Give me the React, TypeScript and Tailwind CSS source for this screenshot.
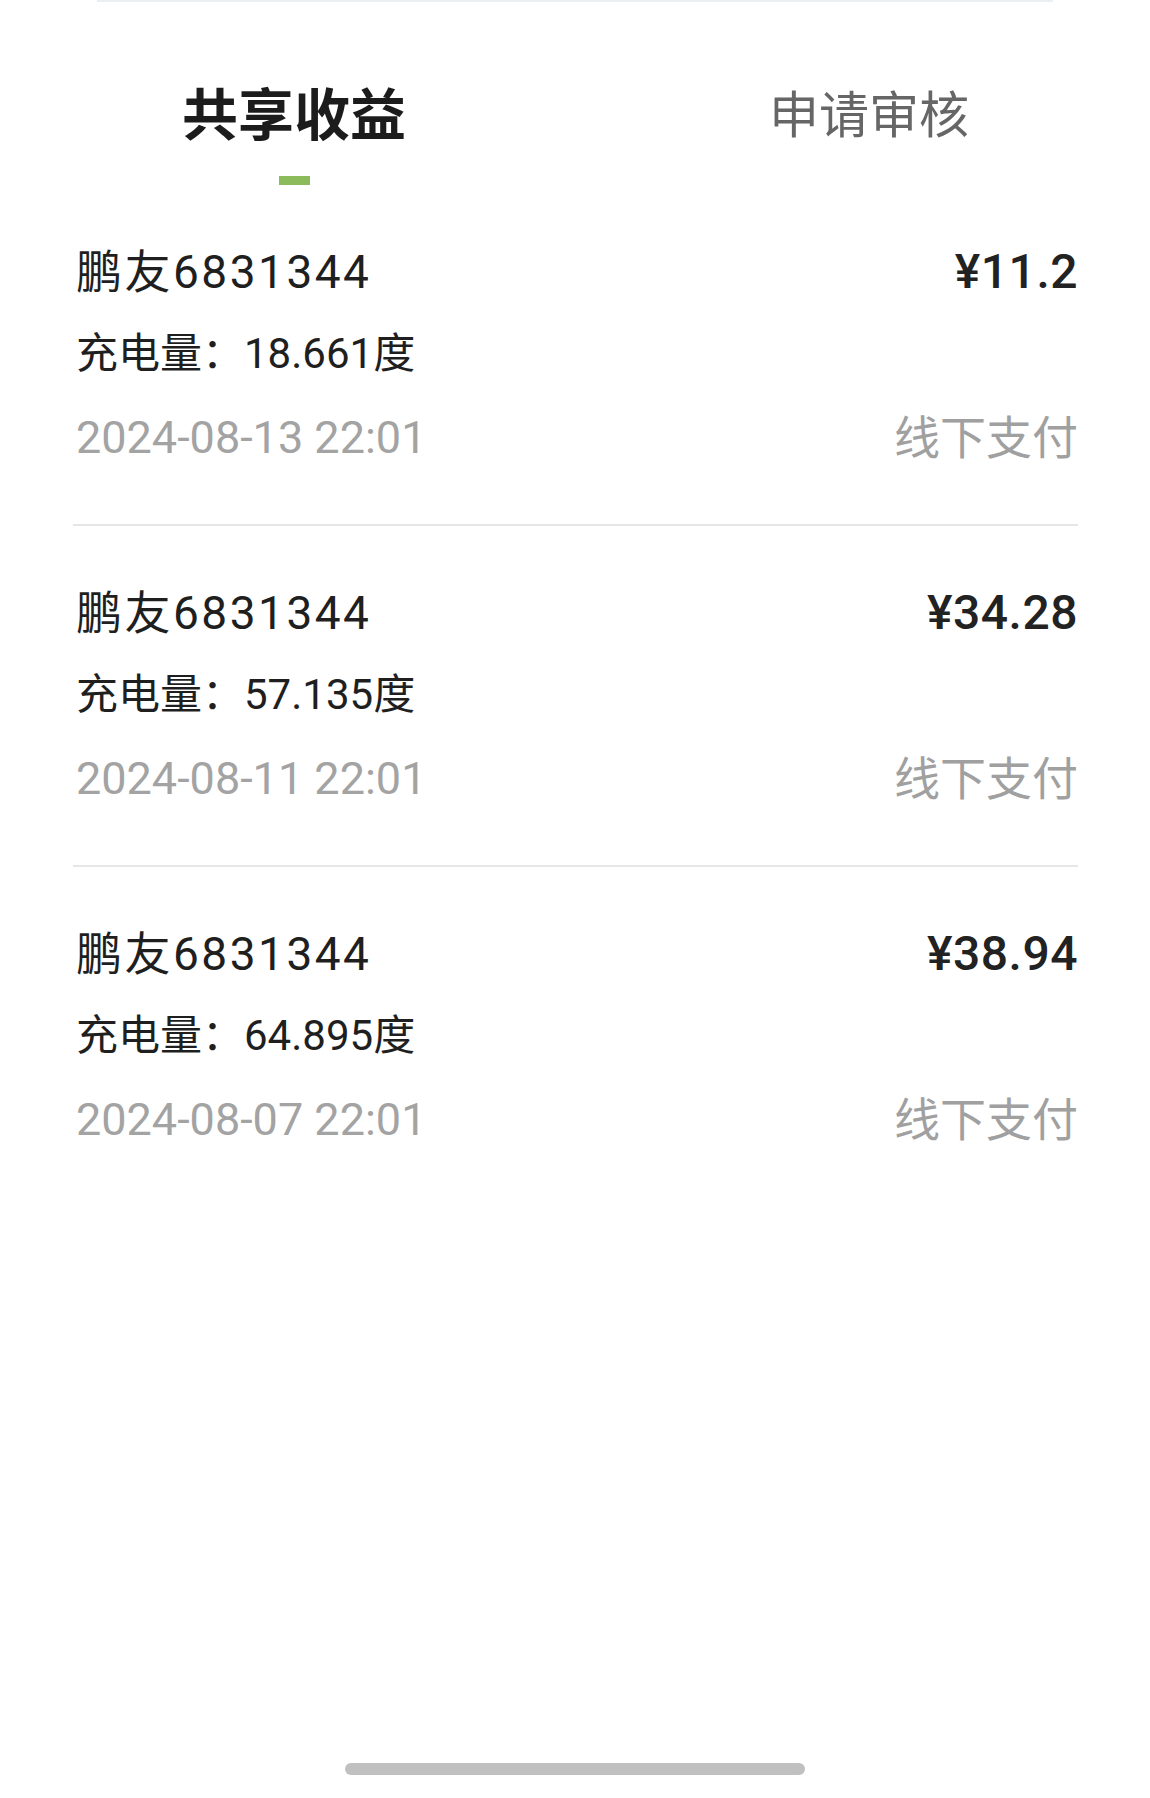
import React from 'react';

interface Record {
    id: number;
    name: string;
    amount: string;
    energy: string;
    time: string;
    payType: string;
}

const records: Record[] = [
    { id: 1, name: '6831344', amount: '¥11.2', energy: '18.661', time: '2024-08-13 22:01', payType: '线下支付' },
    { id: 2, name: '6831344', amount: '¥34.28', energy: '57.135', time: '2024-08-11 22:01', payType: '线下支付' },
    { id: 3, name: '6831344', amount: '¥38.94', energy: '64.895', time: '2024-08-07 22:01', payType: '线下支付' },
];

export default function App() {
    return (
        <div className="min-h-[1798px] w-full bg-white flex flex-col font-[Roboto,'Noto_Sans_CJK_SC',sans-serif]">
            {/* leftover edge of the card above */}
            <div className="mx-[97px] h-[2px] bg-[#eceff1]" />

            {/* tabs */}
            <div className="flex mt-[79px]">
                <div className="w-[588px] flex flex-col items-center">
                    <div className="h-[70px] leading-[70px] text-[56px] font-bold text-[#1c1c1c]">共享收益</div>
                    <div className="mt-[25px] w-[31px] h-[9px] bg-[#8cbb5b]" />
                </div>
                <div className="flex-1 flex flex-col items-center">
                    <div className="h-[70px] leading-[70px] text-[50px] text-[#666666]">申请审核</div>
                </div>
            </div>

            {/* list */}
            <div className="ml-[73px] mr-[72px]">
                {records.map((r, i) => (
                    <div
                        key={r.id}
                        className={`pt-[57px] ${i < records.length - 1 ? 'pb-[56px] border-b-2 border-[#e6e6e6]' : ''}`}
                    >
                        <div className="h-[60px] flex items-center justify-between pl-[3px]">
                            <span className="text-[46px] text-[#1f1f1f] tracking-[2.5px]">鹏友{r.name}</span>
                            <span className="text-[48px] font-medium text-[#222222] tracking-[0.5px]">{r.amount}</span>
                        </div>
                        <div className="mt-[21px] h-[60px] flex items-center pl-[3px]">
                            <span className="text-[42px] text-[#1f1f1f]">充电量：{r.energy}度</span>
                        </div>
                        <div className="mt-[25px] h-[60px] flex items-center justify-between pl-[3px]">
                            <span className="text-[45px] text-[#a3a3a3]">{r.time}</span>
                            <span className="text-[46px] text-[#a0a0a0]">{r.payType}</span>
                        </div>
                    </div>
                ))}
            </div>

            {/* home indicator */}
            <div className="mt-auto mb-[23px] mx-auto w-[460px] h-[12px] rounded-full bg-[#c0c0c0]" />
        </div>
    );
}
